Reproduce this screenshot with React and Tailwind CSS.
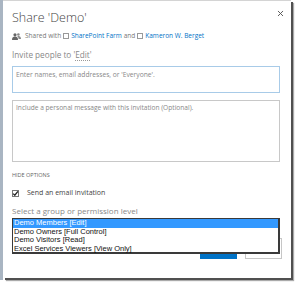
import { X } from 'lucide-react'

const ui = { fontFamily: '"Open Sans", "Noto Sans", sans-serif' }
const arial = { fontFamily: '"Liberation Sans", Arial, sans-serif' }

function PeopleIcon() {
  return (
    <svg width="9" height="7" viewBox="0 0 9 7" className="shrink-0">
      <circle cx="3" cy="1.8" r="1.6" fill="#666" />
      <path d="M0 7 C0 4.5 1.2 3.6 3 3.6 C4.8 3.6 6 4.5 6 7 Z" fill="#666" />
      <circle cx="6.4" cy="1.5" r="1.3" fill="#888" />
      <path d="M5.2 3.3 C5.6 3.1 6 3 6.4 3 C8 3 9 3.9 9 6 L6.6 6 C6.5 4.7 6 3.8 5.2 3.3 Z" fill="#888" />
    </svg>
  )
}

function Box() {
  return <span className="inline-block w-[6px] h-[6px] border border-[#999] bg-white mx-[2px] align-[-1px]" />
}

export default function App() {
  const options = [
    'Demo Members [Edit]',
    'Demo Owners [Full Control]',
    'Demo Visitors [Read]',
    'Excel Services Viewers [View Only]',
  ]
  return (
    <div className="w-[296px] h-[283px] bg-white overflow-hidden" style={ui}>
      <div className="flex h-[280px] w-[293px]">
        <div className="w-[3px] h-full bg-[#a9b5c2] shrink-0" />
        <div className="relative w-[288px] h-[278px] bg-white border-t border-[#d4d4d4] shadow-[2px_2px_0_#505050,3px_3px_1px_#aaa]">
          <button className="absolute right-[6px] top-[8px] text-[#555]">
            <X size={9} strokeWidth={2.5} />
          </button>
          <div className="pl-[9px] pr-[8px]">
            <div className="mt-[8px] h-[18px] text-[12.5px] leading-[18px] font-light text-[#444]">
              Share 'Demo'
            </div>
            <div className="mt-[4px] h-[10px] flex items-center text-[6.5px] leading-[10px] text-[#777]">
              <PeopleIcon />
              <span className="ml-[4px]">Shared with</span>
              <Box />
              <span className="text-[#0072c6]">SharePoint Farm</span>
              <span className="ml-[2px]">and</span>
              <Box />
              <span className="text-[#0072c6]">Kameron W. Berget</span>
            </div>
            <div className="mt-[8px] h-[12px] text-[8.2px] leading-[12px] text-[#888]">
              Invite people to '<span className="border-b border-dotted border-[#999]">Edit</span>'
            </div>
            <div className="mt-[5px] w-[268px] h-[27px] border border-[#a8cbe8] px-[3px] pt-[3px] text-[6.7px] leading-[10px] text-[#888]">
              Enter names, email addresses, or 'Everyone'.
            </div>
            <div className="mt-[7px] w-[268px] h-[62px] border border-[#c8c8c8] px-[3px] pt-[2px] text-[6.6px] leading-[10px] text-[#888]">
              Include a personal message with this invitation (Optional).
            </div>
            <div className="mt-[9px] h-[8px] text-[5.5px] leading-[8px] text-[#666] uppercase">
              Hide options
            </div>
            <div className="mt-[9px] h-[10px] flex items-center text-[7px] leading-[10px] text-[#444]">
              <span className="relative w-[7px] h-[7px] border border-[#777] bg-white shrink-0">
                <svg width="7" height="7" viewBox="0 0 7 7" className="absolute left-[-1px] top-[-1px]">
                  <path d="M1.2 3.6 L2.8 5.2 L5.9 1.4" stroke="#222" strokeWidth="1.3" fill="none" />
                </svg>
              </span>
              <span className="ml-[8px]">Send an email invitation</span>
            </div>
            <div className="mt-[7px] h-[12px] text-[8px] leading-[12px] text-[#888]">
              Select a group or permission level
            </div>
            <div className="relative mt-[1px]">
              <div className="flex justify-end gap-[8px] pt-[20px] pr-[1px]">
                <div className="w-[37px] h-[21px] bg-[#0072c6]" />
                <div className="w-[37px] h-[21px] border border-[#c6c6c6] bg-white" />
              </div>
              <div
                className="absolute left-0 top-0 w-[268px] h-[36px] border border-[#3a3a3a] border-r-[2px] border-b-[2px] bg-white text-[7.5px] leading-[8.5px] text-[#111]"
                style={arial}
              >
                {options.map((o, i) => (
                  <div
                    key={o}
                    className={i === 0 ? 'h-[8.5px] px-[1px] bg-[#3399ff] text-white' : 'h-[8.5px] px-[1px]'}
                  >
                    {o}
                  </div>
                ))}
              </div>
            </div>
          </div>
        </div>
      </div>
    </div>
  )
}
